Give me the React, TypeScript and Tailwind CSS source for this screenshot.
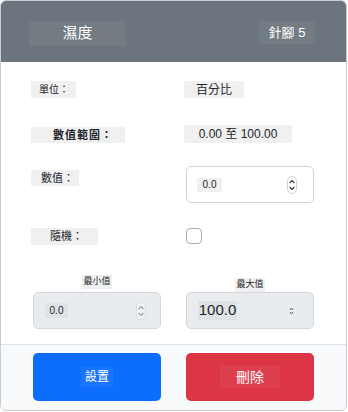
import React from "react";

const FONT = { fontFamily: '"Liberation Sans", "Noto Sans CJK TC", sans-serif' };

function Spinner({ size = "md", faded = false }: { size?: "md" | "sm"; faded?: boolean }) {
  if (size === "sm") {
    return (
      <svg width="5" height="12" viewBox="0 0 5 12" className="shrink-0">
        <path d="M1 5 L2.5 3 L4 5" fill="none" stroke="#555" strokeWidth="0.9" />
        <path d="M1 7 L2.5 9 L4 7" fill="none" stroke="#555" strokeWidth="0.9" />
      </svg>
    );
  }
  const c = faded ? "#9aa0a6" : "#333";
  return (
    <svg width="10" height="18" viewBox="0 0 10 18" className="shrink-0">
      <rect x="0.5" y="0.5" width="9" height="17" rx="4.5" fill={faded ? "#f1f3f5" : "#fff"} stroke={faded ? "#d5d8dc" : "#c8c8c8"} strokeWidth="0.8" />
      <path d="M2.6 7 L5 4.6 L7.4 7" fill="none" stroke={c} strokeWidth="1.2" />
      <path d="M2.6 11 L5 13.4 L7.4 11" fill="none" stroke={c} strokeWidth="1.2" />
    </svg>
  );
}

export default function App() {
  return (
    <div style={FONT} className="w-[347px] h-[411px] border border-[#c9ccd0] rounded-md overflow-hidden bg-white flex flex-col text-[#212529]">
      <div className="h-[61px] bg-[#6c757d] flex items-start justify-between pl-[28px] pr-[31px] pt-[20px]">
        <div className="w-[97px] h-[25px] bg-[#737b83] text-white text-[15px] flex items-center justify-center">濕度</div>
        <div className="w-[56px] h-[23px] bg-[#737b83] text-white text-[13px] flex items-center justify-center">針腳 5</div>
      </div>

      <div className="flex-1 pl-[30px] pr-[32px] flex flex-col">
        <div className="flex items-start mt-[19px]">
          <div className="w-[153px]">
            <div className="w-[45px] h-[17px] bg-[#f0f0f0] text-[10px] flex items-center pl-[8px]">單位：</div>
          </div>
          <div className="w-[60px] h-[17px] bg-[#f0f0f0] text-[12px] flex items-center justify-center">百分比</div>
        </div>

        <div className="flex items-start mt-[27px]">
          <div className="w-[153px] pt-[2px]">
            <div className="w-[94px] h-[16px] bg-[#f0f0f0] text-[11px] font-bold flex items-center pl-[22px] tracking-[1px]">數值範圍：</div>
          </div>
          <div className="w-[108px] h-[18px] bg-[#f0f0f0] text-[12px] flex items-center justify-center">0.00 至 100.00</div>
        </div>

        <div className="flex items-start mt-[23px]">
          <div className="w-[155px] pt-[4px]">
            <div className="w-[48px] h-[16px] bg-[#f0f0f0] text-[11px] flex items-center pl-[10px]">數值：</div>
          </div>
          <div className="w-[128px] h-[37px] border border-[#ced4da] rounded-[5px] flex items-center pl-[10px] pr-[16px] justify-between">
            <div className="w-[25px] h-[14px] bg-[#f0f0f0] text-[10px] flex items-center justify-center">0.0</div>
            <Spinner />
          </div>
        </div>

        <div className="flex items-start mt-[25px]">
          <div className="w-[155px]">
            <div className="w-[67px] h-[17px] bg-[#f0f0f0] text-[11px] flex items-center pl-[19px]">隨機：</div>
          </div>
          <div className="w-[16px] h-[16px] border border-[#a8adb3] rounded-[4px] bg-white" />
        </div>

        <div className="flex items-start mt-[30px] pl-[2px] gap-[25px]">
          <div className="w-[128px] flex flex-col items-center">
            <div className="h-[14px] px-[1px] bg-[#f0f0f0] text-[9px] flex items-center">最小值</div>
            <div className="mt-[3px] w-[128px] h-[37px] bg-[#e9ecef] border border-[#d5d9dd] rounded-[5px] flex items-center pl-[11px] pr-[14px] justify-between">
              <div className="w-[23px] h-[15px] bg-[#e0e3e6] text-[10px] flex items-center justify-center">0.0</div>
              <Spinner faded />
            </div>
          </div>
          <div className="w-[128px] flex flex-col items-center">
            <div className="h-[14px] mt-[3px] px-[1px] bg-[#f0f0f0] text-[9px] flex items-center">最大值</div>
            <div className="w-[128px] h-[37px] bg-[#e9ecef] border border-[#d5d9dd] rounded-[5px] flex items-center pl-[11px] pr-[19px] justify-between">
              <div className="w-[39px] h-[19px] bg-[#dfe2e5] text-[15px] flex items-center justify-center">100.0</div>
              <Spinner size="sm" />
            </div>
          </div>
        </div>
      </div>

      <div className="h-[66px] bg-[#f8f9fa] border-t border-[#dee2e6] flex items-start pt-[8px] pl-[32px] gap-[25px]">
        <button type="button" className="w-[128px] h-[48px] bg-[#0d6efd] rounded-[5px] flex items-center justify-center">
          <span className="w-[32px] h-[20px] bg-white/5 text-white text-[12px] flex items-center justify-center">設置</span>
        </button>
        <button type="button" className="w-[128px] h-[48px] bg-[#dc3545] rounded-[5px] flex items-center justify-center">
          <span className="w-[60px] h-[22px] bg-white/5 text-white text-[14px] flex items-center justify-center">刪除</span>
        </button>
      </div>
    </div>
  );
}
